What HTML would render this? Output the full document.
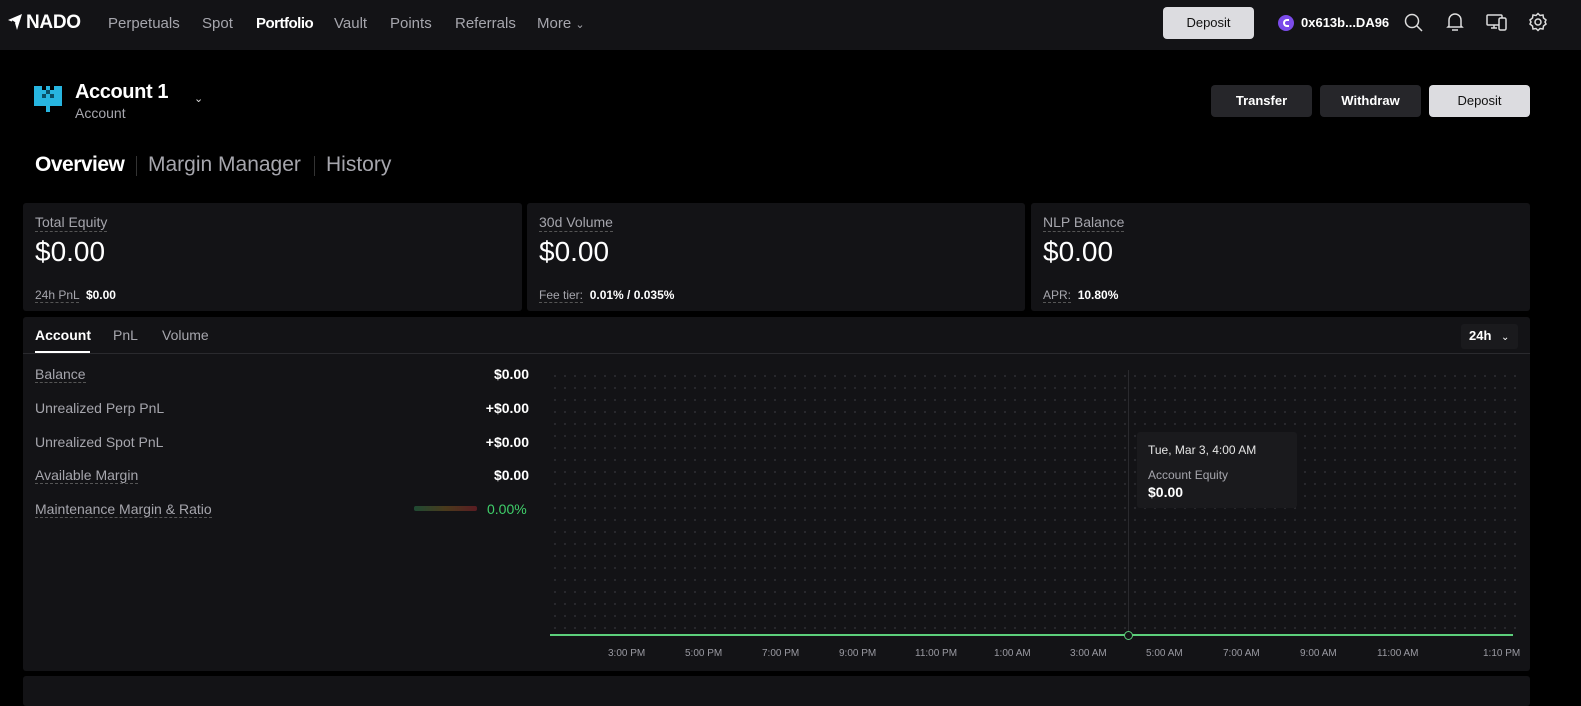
<!DOCTYPE html>
<html><head><meta charset="utf-8"><style>
*{box-sizing:border-box;margin:0;padding:0}
body{width:1581px;height:694px;background:#000;font-family:"Liberation Sans",sans-serif;color:#fff;position:relative;overflow:hidden}
.abs{position:absolute}
.nav{left:0;top:0;width:1581px;height:50px;background:#131316}
.nl{top:15px;font-size:15px;color:#a6a6ad}
.btn{border-radius:4px;font-size:13px;font-weight:bold;text-align:center;line-height:32px}
.card{background:#131316;border-radius:3px}
.lbl{font-size:14px;color:#a6a6ad;border-bottom:1px dashed #555;line-height:17px}
.big{font-size:28px;color:#fff}
.sm{font-size:12px;color:#a6a6ad}
.row{left:35px;font-size:14px;color:#a6a6ad}
.val{font-size:14px;font-weight:bold;color:#fff;text-align:right;right:1052px}
.xl{top:648px;font-size:10px;color:#9a9aa2}
</style></head><body>
<div class="abs nav"></div>
<svg class="abs" style="left:7px;top:13px" width="16" height="18" viewBox="0 0 16 18"><path d="M1 7 L15 1 L10 17 L8 10 Z M8 10 L1 7" fill="#fff"/><path d="M8 10 L5 8" stroke="#131316" stroke-width="1.5"/></svg>
<div class="abs" style="left:26px;top:12px;font-size:19px;font-weight:bold;letter-spacing:-0.3px">NADO</div>
<div class="abs nl" style="left:108px">Perpetuals</div>
<div class="abs nl" style="left:202px">Spot</div>
<div class="abs nl" style="left:256px;color:#fff;font-weight:bold;letter-spacing:-0.5px">Portfolio</div>
<div class="abs nl" style="left:334px">Vault</div>
<div class="abs nl" style="left:390px">Points</div>
<div class="abs nl" style="left:455px">Referrals</div>
<div class="abs nl" style="left:537px">More <span style="font-size:11px">&#8964;</span></div>
<div class="abs btn" style="left:1163px;top:7px;width:91px;height:32px;background:#dcdce0;color:#111;font-weight:normal">Deposit</div>
<div class="abs" style="left:1278px;top:15px;width:16px;height:16px;border-radius:50%;background:#7b4bea"><div style="position:absolute;left:5px;top:4px;width:6px;height:8px;border:2px solid #fff;border-right:none;border-radius:4px 0 0 4px"></div></div>
<div class="abs" style="left:1301px;top:15px;font-size:13px;font-weight:bold">0x613b...DA96</div>
<svg class="abs" style="left:1404px;top:13px" width="20" height="20" fill="none" stroke="#ddd" stroke-width="1.5"><circle cx="8" cy="8" r="6.5"/><path d="M13 13 L18 18"/></svg>
<svg class="abs" style="left:1446px;top:12px" width="18" height="20" fill="none" stroke="#ddd" stroke-width="1.5"><path d="M3 14 V8 a6 6 0 0 1 12 0 V14 L16 15 H2 Z M6 18 H12"/></svg>
<svg class="abs" style="left:1486px;top:13px" width="22" height="18" fill="none" stroke="#ddd" stroke-width="1.5"><rect x="1" y="2" width="15" height="10" rx="1"/><path d="M5 15 H11 M8 12 V15"/><rect x="13" y="5" width="7" height="12" rx="1.5" fill="#131316"/></svg>
<svg class="abs" style="left:1528px;top:12px" width="20" height="20" fill="none" stroke="#ddd" stroke-width="1.5"><path d="M10 1.5 L12 3.5 L15 3 L15.5 6 L18 8 L17 10 L18 12 L15.5 14 L15 17 L12 16.5 L10 18.5 L8 16.5 L5 17 L4.5 14 L2 12 L3 10 L2 8 L4.5 6 L5 3 L8 3.5 Z"/><circle cx="10" cy="10" r="3"/></svg>

<svg class="abs" style="left:34px;top:86px" width="28" height="28" shape-rendering="crispEdges">
<g fill="#27b5e0">
<rect x="0" y="0" width="8" height="4"/><rect x="12" y="0" width="4" height="4"/><rect x="20" y="0" width="8" height="4"/>
<rect x="0" y="4" width="28" height="4"/><rect x="0" y="8" width="8" height="4"/><rect x="12" y="8" width="4" height="4"/><rect x="20" y="8" width="8" height="4"/>
<rect x="0" y="12" width="28" height="4"/><rect x="0" y="16" width="28" height="4"/><rect x="12" y="20" width="4" height="6"/></g>
<g fill="#0a4f66"><rect x="8" y="8" width="4" height="4"/><rect x="16" y="8" width="4" height="4"/><rect x="12" y="4" width="4" height="4"/></g></svg>
<div class="abs" style="left:75px;top:81px;font-size:20px;font-weight:bold;letter-spacing:-0.4px">Account 1</div>
<div class="abs" style="left:75px;top:105px;font-size:14px;color:#a6a6ad">Account</div>
<div class="abs" style="left:194px;top:92px;font-size:11px;color:#ddd">&#8964;</div>

<div class="abs btn" style="left:1211px;top:85px;width:101px;height:32px;background:#26262a">Transfer</div>
<div class="abs btn" style="left:1320px;top:85px;width:101px;height:32px;background:#26262a">Withdraw</div>
<div class="abs btn" style="left:1429px;top:85px;width:101px;height:32px;background:#dcdce0;color:#111;font-weight:normal">Deposit</div>

<div class="abs" style="left:35px;top:153px;font-size:21px;font-weight:bold;letter-spacing:-0.5px">Overview</div>
<div class="abs" style="left:136px;top:156px;width:1px;height:20px;background:#333"></div>
<div class="abs" style="left:148px;top:153px;font-size:21px;color:#a6a6ad">Margin Manager</div>
<div class="abs" style="left:314px;top:156px;width:1px;height:20px;background:#333"></div>
<div class="abs" style="left:326px;top:153px;font-size:21px;color:#a6a6ad">History</div>

<div class="abs card" style="left:23px;top:203px;width:499px;height:108px"></div>
<div class="abs card" style="left:527px;top:203px;width:498px;height:108px"></div>
<div class="abs card" style="left:1031px;top:203px;width:499px;height:108px"></div>
<div class="abs lbl" style="left:35px;top:214px">Total Equity</div>
<div class="abs lbl" style="left:539px;top:214px">30d Volume</div>
<div class="abs lbl" style="left:1043px;top:214px">NLP Balance</div>
<div class="abs big" style="left:35px;top:236px">$0.00</div>
<div class="abs big" style="left:539px;top:236px">$0.00</div>
<div class="abs big" style="left:1043px;top:236px">$0.00</div>
<div class="abs sm" style="left:35px;top:288px"><span style="border-bottom:1px dashed #555">24h PnL</span> <b style="color:#fff">&nbsp;$0.00</b></div>
<div class="abs sm" style="left:539px;top:288px"><span style="border-bottom:1px dashed #555">Fee tier:</span> <b style="color:#fff">&nbsp;0.01% / 0.035%</b></div>
<div class="abs sm" style="left:1043px;top:288px"><span style="border-bottom:1px dashed #555">APR:</span> <b style="color:#fff">&nbsp;10.80%</b></div>

<div class="abs card" style="left:23px;top:317px;width:1507px;height:354px"></div>
<div class="abs" style="left:23px;top:353px;width:1507px;height:1px;background:#2a2a2e"></div>
<div class="abs" style="left:35px;top:327px;font-size:14px;font-weight:bold">Account</div>
<div class="abs" style="left:35px;top:351px;width:55px;height:2px;background:#fff"></div>
<div class="abs" style="left:113px;top:327px;font-size:14px;color:#a6a6ad">PnL</div>
<div class="abs" style="left:162px;top:327px;font-size:14px;color:#a6a6ad">Volume</div>
<div class="abs" style="left:1461px;top:324px;width:57px;height:25px;background:#1a1a1d;border-radius:3px;font-size:13px;font-weight:bold;padding:4px 0 0 8px">24h <span style="font-weight:normal;font-size:10px;margin-left:6px">&#8964;</span></div>

<div class="abs row" style="top:366px"><span style="border-bottom:1px dashed #555">Balance</span></div>
<div class="abs row" style="top:400px">Unrealized Perp PnL</div>
<div class="abs row" style="top:434px">Unrealized Spot PnL</div>
<div class="abs row" style="top:467px"><span style="border-bottom:1px dashed #555">Available Margin</span></div>
<div class="abs row" style="top:501px"><span style="border-bottom:1px dashed #555">Maintenance Margin &amp; Ratio</span></div>
<div class="abs val" style="top:366px">$0.00</div>
<div class="abs val" style="top:400px">+$0.00</div>
<div class="abs val" style="top:434px">+$0.00</div>
<div class="abs val" style="top:467px">$0.00</div>
<div class="abs" style="left:414px;top:506px;width:63px;height:5px;border-radius:2px;background:linear-gradient(90deg,#1f4a33,#4a3a1c,#5a1c22)"></div>
<div class="abs" style="left:487px;top:501px;font-size:14px;color:#3fcf6a">0.00%</div>

<div class="abs" style="left:554px;top:375px;width:962px;height:256px;background-image:radial-gradient(circle,#2e2e33 0.9px,transparent 1.1px);background-size:10px 12px;background-position:-4px -5px"></div>
<div class="abs" style="left:1128px;top:370px;width:1px;height:265px;background:#2a2a2e"></div>
<div class="abs" style="left:550px;top:634px;width:963px;height:2px;background:#5ccf7b"></div>
<div class="abs" style="left:1124px;top:631px;width:9px;height:9px;border-radius:50%;border:1.5px solid #5ccf7b;background:#131316"></div>
<div class="abs" style="left:1137px;top:432px;width:160px;height:76px;background:#1a1a1d;border-radius:3px"></div>
<div class="abs" style="left:1148px;top:443px;font-size:12px;color:#e6e6e6">Tue, Mar 3, 4:00 AM</div>
<div class="abs" style="left:1148px;top:468px;font-size:12px;color:#a6a6ad">Account Equity</div>
<div class="abs" style="left:1148px;top:484px;font-size:14px;font-weight:bold">$0.00</div>

<div class="abs xl" style="left:608px">3:00 PM</div>
<div class="abs xl" style="left:685px">5:00 PM</div>
<div class="abs xl" style="left:762px">7:00 PM</div>
<div class="abs xl" style="left:839px">9:00 PM</div>
<div class="abs xl" style="left:915px">11:00 PM</div>
<div class="abs xl" style="left:994px">1:00 AM</div>
<div class="abs xl" style="left:1070px">3:00 AM</div>
<div class="abs xl" style="left:1146px">5:00 AM</div>
<div class="abs xl" style="left:1223px">7:00 AM</div>
<div class="abs xl" style="left:1300px">9:00 AM</div>
<div class="abs xl" style="left:1377px">11:00 AM</div>
<div class="abs xl" style="left:1483px">1:10 PM</div>

<div class="abs card" style="left:23px;top:676px;width:1507px;height:30px"></div>
</body></html>
